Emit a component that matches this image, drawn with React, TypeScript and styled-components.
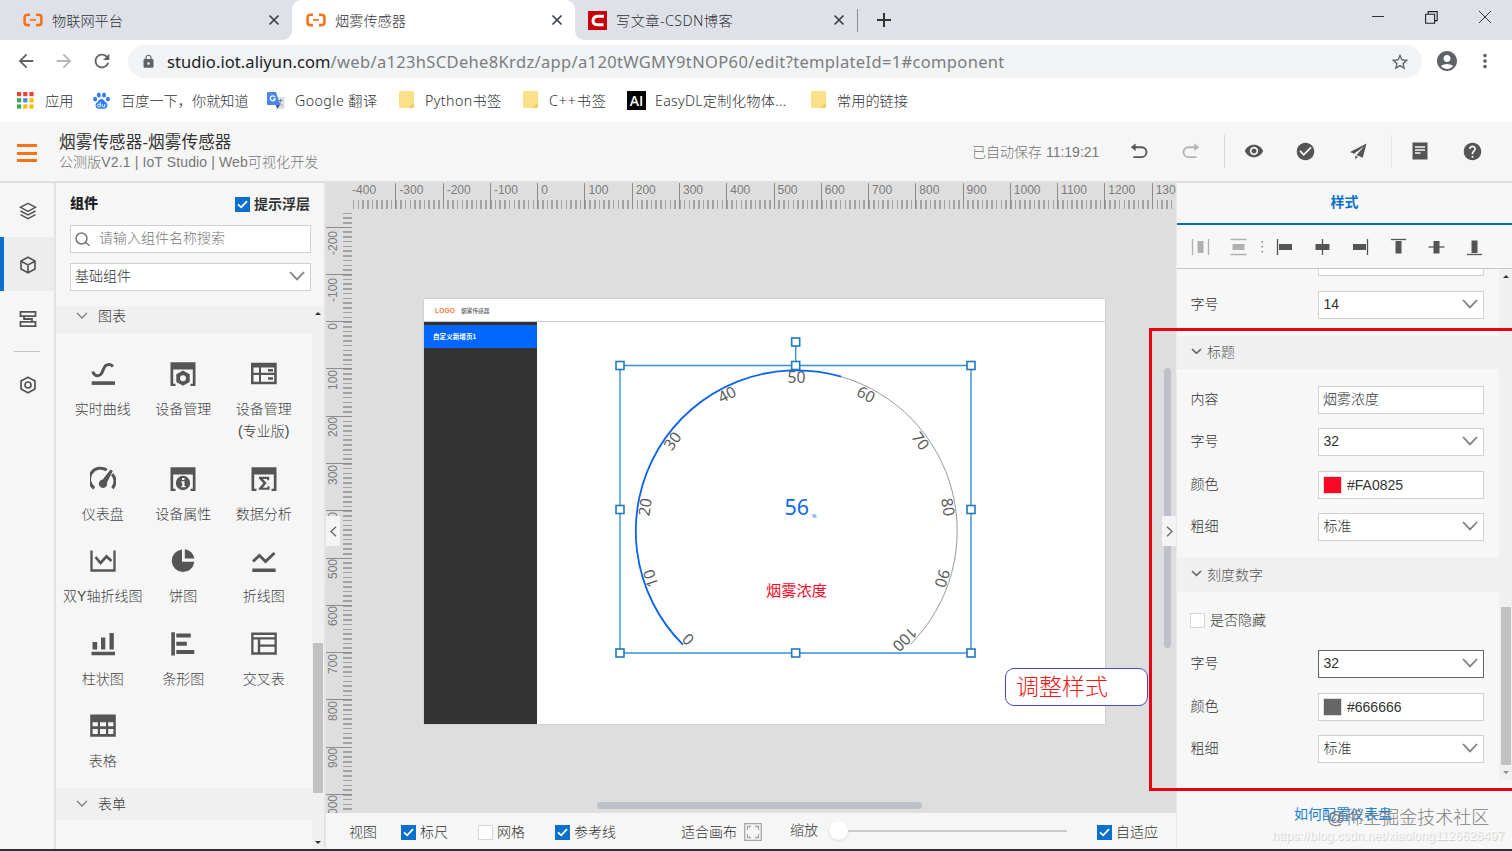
import React from "react";
import styled, { createGlobalStyle, css } from "styled-components";
import {
  MdLock,
  MdArrowBack,
  MdArrowForward,
  MdRefresh,
  MdStarBorder,
  MdAccountCircle,
  MdMoreVert,
  MdVisibility,
  MdCheckCircle,
  MdHelp,
} from "react-icons/md";

const appFont = `"Liberation Sans", "Noto Sans CJK SC", sans-serif`;
const chromeFont = `"Noto Sans", "Noto Sans CJK SC", sans-serif`;

const GlobalStyle = createGlobalStyle`
  *, *::before, *::after { box-sizing: border-box; }
  body { margin: 0; overflow: hidden; background: #fff; font-family: ${appFont}; }
  svg { display: block; flex: none; }
`;

const Window = styled.div`
  position: relative;
  width: 1512px;
  height: 851px;
  display: flex;
  flex-direction: column;
  overflow: hidden;
  border-bottom: 2px solid #2f3033;
  background: #f6f6f6;
  color: #333;
  font-size: 14px;
  font-weight: 300;
`;

/* ---------- browser chrome ---------- */

const TabStrip = styled.div`
  height: 40px;
  flex: none;
  display: flex;
  background: #dee1e8;
  font-family: ${chromeFont};
`;

const Tab = styled.div<{ $w: number; $active?: boolean; $pl: number }>`
  position: relative;
  width: ${(p) => p.$w}px;
  height: 40px;
  display: flex;
  align-items: center;
  padding: 0 12px 0 ${(p) => p.$pl}px;
  font-size: 14.2px;
  color: #303336;
  ${(p) =>
    p.$active &&
    css`
      background: #fff;
      border-radius: 9px 9px 0 0;
      &::before,
      &::after {
        content: "";
        position: absolute;
        bottom: 0;
        width: 9px;
        height: 9px;
      }
      &::before {
        left: -9px;
        background: radial-gradient(circle at 0 0, transparent 8.5px, #fff 9px);
      }
      &::after {
        right: -9px;
        background: radial-gradient(circle at 100% 0, transparent 8.5px, #fff 9px);
      }
    `}
`;

const TabTitle = styled.span<{ $ls?: number }>`
  flex: 1;
  margin-left: 9px;
  padding-top: 1px;
  line-height: 20px;
  letter-spacing: ${(p) => p.$ls ?? 0}px;
  white-space: nowrap;
`;

const TabDivider = styled.div`
  width: 1px;
  height: 23px;
  margin-top: 9px;
  background: #8b8e94;
`;

const NewTab = styled.div`
  width: 51px;
  display: flex;
  align-items: center;
  justify-content: center;
`;

const WindowButtons = styled.div`
  margin-left: auto;
  height: 34px;
  display: flex;
  align-items: center;
  gap: 41px;
  padding-right: 21px;
`;

const CsdnIcon = styled.span`
  width: 19px;
  height: 19px;
  background: #c7000b;
  display: flex;
  align-items: center;
  justify-content: center;
`;

const NavBar = styled.div`
  height: 42px;
  flex: none;
  display: flex;
  align-items: center;
  gap: 16px;
  padding: 0 15px;
  background: #fff;
  color: #5f6368;
`;

const AddressBar = styled.div`
  flex: none;
  width: 1294px;
  height: 33px;
  display: flex;
  align-items: center;
  margin: 1px -3px 0 -1px;
  padding: 0 12px 0 13px;
  border-radius: 17px;
  background: #f1f3f4;
  font-family: ${chromeFont};
  color: #5f6368;
`;

const NavEnd = styled.div`
  display: flex;
  align-items: center;
  gap: 15px;
`;

const Url = styled.span`
  flex: 1;
  margin-left: 11px;
  font-size: 16.5px;
  font-weight: 400;
  letter-spacing: 0.34px;
  line-height: 24px;
  color: #7a7d81;
  b {
    font-weight: 400;
    letter-spacing: 0.08px;
    color: #202124;
  }
`;

const Bookmarks = styled.div`
  height: 40px;
  flex: none;
  display: flex;
  padding: 0 0 3px 17px;
  background: #fff;
  font-family: ${chromeFont};
  font-size: 14.2px;
  color: #303336;
`;

const Bookmark = styled.div<{ $w: number; $gap?: number; $ls?: number }>`
  width: ${(p) => p.$w}px;
  display: flex;
  align-items: center;
  gap: ${(p) => p.$gap ?? 11}px;
  letter-spacing: ${(p) => p.$ls ?? 0}px;
  line-height: 22px;
  white-space: nowrap;
`;

const Folder = styled.span`
  width: 15px;
  height: 17px;
  margin: 0 0 2px 1px;
  border-radius: 1.5px;
  background: linear-gradient(135deg, #fbe08a 82%, #f3cb58 82%);
`;

const EasyIcon = styled.span`
  width: 19px;
  height: 19px;
  margin-bottom: 1px;
  background: #000;
  color: #fff;
  font: 600 14px/19px "Open Sans", sans-serif;
  letter-spacing: 0;
  text-align: center;
`;

/* ---------- application header ---------- */

const Header = styled.header`
  height: 61px;
  flex: none;
  display: flex;
  align-items: center;
  background: #f6f6f6;
  border-bottom: 2px solid #dfdfdf;
  color: #555;
`;

const MenuButton = styled.div`
  width: 20px;
  height: 18px;
  margin: 3px 22px 0 17px;
  display: flex;
  flex-direction: column;
  justify-content: space-between;
  i {
    height: 3px;
    background: #f97316;
  }
`;

const TitleBlock = styled.div`
  flex: 1;
  display: flex;
  flex-direction: column;
`;

const AppTitle = styled.div`
  font-size: 16.6px;
  font-weight: 400;
  line-height: 20px;
  letter-spacing: 0.1px;
  padding-top: 1px;
  color: #333;
`;

const AppSubtitle = styled.div`
  font-size: 14px;
  line-height: 19px;
  letter-spacing: 0.12px;
  color: #777;
`;

const Saved = styled.div`
  width: 148px;
  padding-bottom: 2px;
  font-size: 14px;
  color: #777;
`;

const Tool = styled.div<{ $w: number }>`
  width: ${(p) => p.$w}px;
  padding-bottom: 1px;
  display: flex;
  justify-content: center;
`;

const ToolDivider = styled.div<{ $soft?: boolean }>`
  width: 1px;
  height: 33px;
  margin-left: ${(p) => (p.$soft ? 3 : 0)}px;
  background: ${(p) => (p.$soft ? "#e6e6e6" : "#d6d6d6")};
`;

/* ---------- body ---------- */

const Body = styled.div`
  flex: 1;
  min-height: 0;
  display: flex;
`;

const Rail = styled.nav`
  width: 56px;
  flex: none;
  border-right: 2px solid #e2e2e2;
  display: flex;
  flex-direction: column;
  color: #555;
`;

const RailItem = styled.div<{ $active?: boolean }>`
  height: 54px;
  display: flex;
  align-items: center;
  justify-content: center;
  border-left: 4px solid ${(p) => (p.$active ? "#0a70cc" : "transparent")};
  padding: 2px 3px 0 0;
  background: ${(p) => (p.$active ? "#ededed" : "transparent")};
`;

const RailDivider = styled.div`
  width: 26px;
  height: 1px;
  margin: 6px 0 5px 14px;
  background: #c4c4c4;
`;

const Components = styled.aside`
  width: 270px;
  flex: none;
  display: flex;
  flex-direction: column;
  border-right: 2px solid #e4e4e4;
`;

const PanelTop = styled.div`
  height: 42px;
  display: flex;
  align-items: center;
  justify-content: space-between;
  padding: 1px 14px 0 14px;
  font-weight: 700;
  line-height: 20px;
  strong {
    padding-bottom: 3px;
    color: #222;
  }
`;

const CheckLabel = styled.label<{ $w?: number; $lift?: number }>`
  display: flex;
  align-items: center;
  gap: 4px;
  width: ${(p) => (p.$w ? p.$w + "px" : "auto")};
  white-space: nowrap;
  line-height: 20px;
  > em {
    font-style: normal;
    padding-bottom: ${(p) => p.$lift ?? 0}px;
  }
`;

const Box = styled.span<{ $on?: boolean }>`
  width: 15px;
  height: 15px;
  flex: none;
  display: flex;
  align-items: center;
  justify-content: center;
  background: ${(p) => (p.$on ? "#0a70cc" : "#fff")};
  border: ${(p) => (p.$on ? "none" : "1px solid #d6d6d6")};
`;

const Field = styled.div<{ $w: number; $strong?: boolean; $pl?: number }>`
  width: ${(p) => p.$w}px;
  height: 28px;
  flex: none;
  display: flex;
  align-items: center;
  justify-content: space-between;
  padding: 0 5px 2px ${(p) => p.$pl ?? 4.5}px;
  background: #fff;
  border: ${(p) => (p.$strong ? "1.5px solid #666" : "1px solid #d2d2d2")};
  line-height: 20px;
`;

const SearchField = styled(Field)`
  justify-content: flex-start;
  gap: 9px;
  margin: 0 0 10px 14px;
  color: #777;
`;

const LibraryField = styled(Field)`
  margin-left: 14px;
`;

const ScrollArea = styled.div`
  flex: 1;
  min-height: 0;
  margin-top: 15px;
  display: flex;
`;

const ScrollBody = styled.div`
  flex: 1;
  min-width: 0;
`;

const GroupHead = styled.div<{ $h: number; $shift?: number }>`
  height: ${(p) => p.$h}px;
  display: flex;
  align-items: center;
  gap: 10px;
  padding: 0 0 ${(p) => p.$shift ?? 0}px 20px;
  background: #f0f0f0;
  line-height: 20px;
`;

const Palette = styled.div`
  display: grid;
  grid-template-columns: 80.5px 80.5px 80.5px;
  padding: 17px 0 3.5px 6.5px;
`;

const PaletteItem = styled.div`
  display: flex;
  flex-direction: column;
  align-items: center;
  padding-bottom: 12.5px;
  line-height: 22px;
  color: #444;
  text-align: center;
  white-space: nowrap;
`;

const IconSlot = styled.div`
  height: 48px;
  display: flex;
  align-items: center;
  justify-content: center;
`;

const Track = styled.div<{ $w: number; $bottom?: number }>`
  width: ${(p) => p.$w}px;
  flex: none;
  display: flex;
  flex-direction: column;
  align-items: center;
  justify-content: space-between;
  background: #f0f0f0;
  padding: 6px 0 ${(p) => p.$bottom ?? 5}px;
`;

const Thumb = styled.div<{ $h: number; $mt: number }>`
  width: 10px;
  height: ${(p) => p.$h}px;
  margin-top: ${(p) => p.$mt}px;
  margin-bottom: auto;
  background: #c1c1c1;
`;

const Arrow = styled.i<{ $down?: boolean; $dim?: boolean }>`
  border: 3px solid transparent;
  ${(p) =>
    p.$down
      ? `border-top: 3px solid ${p.$dim ? "#888" : "#333"}; border-bottom: none;`
      : "border-bottom: 3px solid #333; border-top: none;"}
`;

/* ---------- canvas ---------- */

const Center = styled.main`
  width: 850px;
  flex: none;
  display: flex;
  flex-direction: column;
`;

const Stage = styled.div`
  position: relative;
  height: 630px;
  flex: none;
  overflow: hidden;
  background: #dedede;
`;

const step = 47.28;

const RulerX = styled.div`
  position: absolute;
  left: 26px;
  top: 0;
  right: 0;
  height: 26px;
  overflow: hidden;
  display: flex;
  background: repeating-linear-gradient(to right, #a2a2a2 0 1.6px, transparent 1.6px ${step / 10}px) -3.9px 17px / 1000px 9px no-repeat;
`;

const MarkX = styled.div<{ $first?: boolean }>`
  width: ${step}px;
  height: 26px;
  flex: none;
  margin-left: ${(p) => (p.$first ? "-3.9px" : "0")};
  border-left: 1px solid #8c8c8c;
  padding-left: 3px;
  font-size: 12px;
  font-weight: 400;
  line-height: 14px;
  color: #7c7c7c;
`;

const RulerY = styled.div`
  position: absolute;
  left: 0;
  top: 29px;
  bottom: 0;
  width: 26px;
  overflow: hidden;
  display: flex;
  flex-direction: column;
  background: repeating-linear-gradient(to bottom, #a2a2a2 0 1.6px, transparent 1.6px ${step / 10}px) 17px -32.6px / 9px 1000px no-repeat;
`;

const MarkY = styled.div<{ $first?: boolean; $pt: number }>`
  height: ${step}px;
  flex: none;
  margin-top: ${(p) => (p.$first ? "-32.6px" : "0")};
  border-top: 1px solid #8c8c8c;
  padding-top: ${(p) => p.$pt}px;
  font-size: 12px;
  font-weight: 400;
  color: #7c7c7c;
  span {
    display: block;
    width: 14px;
    line-height: 14px;
    writing-mode: vertical-rl;
    transform: rotate(180deg);
  }
`;

const Page = styled.div`
  position: absolute;
  left: 98px;
  top: 116px;
  width: 681px;
  height: 425px;
  display: flex;
  flex-direction: column;
  background: #fff;
  box-shadow: 0 0 2px rgba(0, 0, 0, 0.18);
`;

const PageHeader = styled.div`
  height: 23px;
  flex: none;
  display: flex;
  align-items: center;
  gap: 6px;
  padding-left: 11px;
  border-bottom: 1px solid #c8c8c8;
  font-size: 5.7px;
  font-weight: 400;
  color: #444;
  b {
    font-size: 6.8px;
    font-weight: 700;
    color: #ff7a3d;
  }
`;

const PageBody = styled.div`
  flex: 1;
  display: flex;
`;

const PageSide = styled.div`
  width: 113px;
  padding-top: 3px;
  background: #333;
`;

const PageLink = styled.div`
  height: 23px;
  padding-left: 9px;
  background: #06f;
  color: #fff;
  font-size: 6.6px;
  font-weight: 700;
  line-height: 23px;
`;

const Selected = styled.svg`
  position: absolute;
  left: 284px;
  top: 149px;
  font-family: "Noto Sans", "Noto Sans CJK SC", sans-serif;
`;

const Fold = styled.div<{ $right?: boolean }>`
  position: absolute;
  top: 333px;
  ${(p) => (p.$right ? "right: 0;" : "left: 0;")}
  width: 14px;
  height: 30px;
  display: flex;
  align-items: center;
  justify-content: center;
  background: #f4f4f4;
`;

const VBar = styled.div`
  position: absolute;
  left: 838px;
  top: 185px;
  width: 7px;
  height: 280px;
  border-radius: 4px;
  background: #bec1cb;
`;

const HBar = styled.div`
  position: absolute;
  left: 271px;
  top: 619px;
  width: 325px;
  height: 7px;
  border-radius: 4px;
  background: #bec1c8;
`;

const BottomBar = styled.div`
  flex: 1;
  display: flex;
  align-items: center;
  padding: 2px 0 0 23px;
  line-height: 20px;
`;

const BarText = styled.span<{ $w: number }>`
  width: ${(p) => p.$w}px;
  flex: none;
`;

const ZoomText = styled(BarText)`
  padding-left: 28px;
  margin-top: -4px;
`;

const Zoom = styled.div`
  width: 238px;
  margin: -3px 30px 0 9px;
  display: flex;
  align-items: center;
  i {
    width: 19px;
    height: 19px;
    border-radius: 50%;
    background: #fff;
    box-shadow: 0 1px 3px rgba(0, 0, 0, 0.12);
  }
  &::after {
    content: "";
    flex: 1;
    height: 2px;
    background: #cbcbcb;
  }
`;

/* ---------- style inspector ---------- */

const Inspector = styled.aside`
  flex: 1;
  display: flex;
  flex-direction: column;
  background: #f7f7f7;
  border-left: 1px solid #ececec;
`;

const InspectorTab = styled.div`
  height: 42px;
  flex: none;
  border-bottom: 2px solid #0a6ab8;
  color: #0a70cc;
  font-weight: 700;
  line-height: 39px;
  text-align: center;
`;

const AlignBar = styled.div`
  height: 44px;
  flex: none;
  display: flex;
  align-items: center;
  padding-left: 14px;
  border-bottom: 1px solid #c6c6c6;
`;

const AlignSlot = styled.div<{ $w: number }>`
  width: ${(p) => p.$w}px;
`;

const InspectorScroll = styled.div`
  height: 511px;
  flex: none;
  display: flex;
  overflow: hidden;
`;

const Props = styled.div`
  flex: 1;
`;

const Clipped = styled.div`
  width: 166px;
  height: 7px;
  margin-left: 141px;
  background: #fff;
  border: 1px solid #d2d2d2;
  border-top: none;
`;

const PropRow = styled.div<{ $mt: number }>`
  height: 28px;
  margin-top: ${(p) => p.$mt}px;
  padding-left: 13.5px;
  display: flex;
  align-items: center;
  line-height: 20px;
  > span {
    width: 127.5px;
    padding-bottom: 2px;
  }
`;

const PropHead = styled.div<{ $mt: number; $h: number }>`
  height: ${(p) => p.$h}px;
  margin-top: ${(p) => p.$mt}px;
  padding: 0 0 3px 14px;
  display: flex;
  align-items: center;
  gap: 5px;
  background: #f0f0f0;
  color: #555;
`;

const HideRow = styled(CheckLabel)`
  height: 20px;
  margin: 18px 0 0 13px;
  gap: 5px;
`;

const Swatch = styled.i<{ $c: string }>`
  width: 19px;
  height: 18px;
  margin-right: 5px;
  border: 1px solid #ddd;
  background: ${(p) => p.$c};
`;

const ColorValue = styled.span`
  display: flex;
  align-items: center;
  padding-top: 1px;
`;

const Help = styled.a`
  margin: 24px 0 0 117px;
  line-height: 20px;
  font-weight: 400;
  color: #1b7fd3;
`;

/* ---------- annotations ---------- */

const RedFrame = styled.div`
  position: absolute;
  left: 1149px;
  top: 328px;
  width: 370px;
  height: 463px;
  border: 3px solid #ec0010;
`;

const Callout = styled.div`
  position: absolute;
  left: 1005px;
  top: 668px;
  width: 143px;
  height: 38px;
  padding-left: 10px;
  border: 1px solid #4a4ac8;
  border-radius: 9px;
  background: #fff;
  color: #f01818;
  font: 300 23px/38px "Liberation Serif", "Noto Sans CJK SC", serif;
`;

const Watermark = styled.div<{ $url?: boolean }>`
  position: absolute;
  white-space: nowrap;
  ${(p) =>
    p.$url
      ? css`
          left: 1272px;
          top: 828px;
          font: 400 12.6px/17px "Liberation Sans", sans-serif;
          color: #fafafa;
          text-shadow: 1px 1px 1px #cacaca;
        `
      : css`
          left: 1327px;
          top: 806px;
          font: 300 18px/24px "Liberation Sans", "Noto Sans CJK SC", sans-serif;
          color: #808080;
        `}
`;

/* ---------- icons ---------- */

const dark = "#555";

const CloseX = () => (
  <svg width="12" height="12" viewBox="0 0 12 12" stroke="#3c4043" strokeWidth="1.7">
    <path d="M1.5 1.5l9 9M10.5 1.5l-9 9" />
  </svg>
);

const AliLogo = () => (
  <svg width="20" height="14" viewBox="0 0 20 14" fill="none" stroke="#f97316" strokeWidth="2.6">
    <path d="M7 1.7H4.5Q1.6 1.7 1.6 4.4v5Q1.600 12.1 4.5 12.1H7" />
    <path d="M13 1.7h2.5q2.900 0 2.900 2.700v5q0 2.700-2.900 2.700H13" />
    <path d="M7 6.900h6" strokeWidth="1.700" />
  </svg>
);

const Chevron = ({ w = 16, c = "#808080", s = 1.8 }: { w?: number; c?: string; s?: number }) => (
  <svg width={w} height={w * 0.6} viewBox={`0 0 ${w} ${w * 0.6}`} fill="none" stroke={c} strokeWidth={s}>
    <path d={`M1 1L${w / 2} ${w * 0.6 - 1.2}L${w - 1} 1`} />
  </svg>
);

const Check = () => (
  <svg width="11" height="9" viewBox="0 0 11 9" fill="none" stroke="#fff" strokeWidth="1.8">
    <path d="M1 4.3L4.2 7.3L10 1.2" />
  </svg>
);

const Undo = ({ flip, c }: { flip?: boolean; c: string }) => (
  <svg width="18" height="16" viewBox="0 0 18 16" fill="none" stroke={c} strokeWidth="1.9">
    <g transform={flip ? "translate(18 0) scale(-1 1)" : undefined}>
      <path d="M4 4.3h7.600a4.700 4.700 0 0 1 0 9.800H3.400" />
      <path d="M5.600.6L.8 4.300l4.800 3.800z" fill={c} stroke="none" />
    </g>
  </svg>
);

const WindowFrame = () => <path d="M.5 1.300h25V25h-5v-2.200h2.300V8.500H3.200v14.300h2.300V25h-5z" />;

const paletteIcons: Record<string, React.ReactNode> = {
  curve: (
    <>
      <path d="M2.800 10.500c1.200 5 6.500 5.500 8.700 2L14 7c1.500-4 6-4.500 9-1.500" fill="none" stroke={dark} strokeWidth="3" />
      <path d="M1.700 20.300H25v3.600H1.700z" />
    </>
  ),
  device: (
    <>
      <WindowFrame />
      <path fillRule="evenodd" d="M13 9.500l6.700 3.800V21L13 24.800 6.300 21v-7.700zM13 14.200a3 3 0 1 0 0 6 3 3 0 0 0 0-6z" />
    </>
  ),
  devicePro: (
    <>
      <path fillRule="evenodd" d="M0 1.700h25.700v21.600H0zM2.500 6.500v5.200H8V6.500zM10 6.500v5.200h13.200V6.500zM2.500 14v6.800H8V14zM10 14v6.800h13.200V14z" />
      <path d="M17 8h5v2.500h-5zM17 16.200h5v2.500h-5z" />
    </>
  ),
  gauge: (
    <>
      <path d="M4.300 22.200A10.400 10.400 0 0 1 16.800 4.100M22.200 8.200a10.400 10.400 0 0 1 .2 14" fill="none" stroke={dark} strokeWidth="3" />
      <path d="M20.500 3.500l2.300 1.500-5.800 11.400a4.200 4.200 0 1 1-4.300-2.800z" />
    </>
  ),
  info: (
    <>
      <WindowFrame />
      <circle cx="13" cy="17" r="7.200" />
      <path d="M12 12h2.500v2H12zM11.200 15.300h3.300V20h1v1.300h-4.300V20h1v-3.400h-1z" fill="#f6f6f6" />
    </>
  ),
  sigma: (
    <>
      <WindowFrame />
      <path d="M7.800 10.700h10.400v3.500h-1.700l-.6-1.300h-4l3.700 4.200-3.900 4.700h4.400l.7-1.600h1.800v3.600H7.800v-1.500l4.500-5.100-4.500-5z" />
    </>
  ),
  dualLine: (
    <>
      <path d="M1.500 2.500v20h23v-20" fill="none" stroke={dark} strokeWidth="2.300" />
      <path d="M5.500 9l5 6 6-6.500 5 4.500" fill="none" stroke={dark} strokeWidth="2.700" />
    </>
  ),
  pie: (
    <>
      <path d="M12 1.500v12.200h12.300A11.300 11.300 0 1 1 12 1.500z" />
      <path d="M14.800 1.300a11.300 11.300 0 0 1 9.600 9.200h-9.600z" />
    </>
  ),
  line: (
    <>
      <path d="M2 13.500l6.500-6 6 6 9-8.500" fill="none" stroke={dark} strokeWidth="2.900" />
      <path d="M1.300 20.500h23.300V24H1.300z" />
    </>
  ),
  column: <path d="M2.500 11h4.700v7.500H2.500zM11 6.500h4.300v12H11zM19.500 2h4.300v16.500h-4.300zM1.500 20.700H25v3.500H1.500z" />,
  bar: <path d="M1.300 1.300h3.600v23.300H1.300zM6.300 2.500h14.500v4H6.300zM6.300 10.800h10.500v4H6.300zM6.300 19h18v4h-18z" />,
  cross: (
    <path fillRule="evenodd" d="M.2 1.500h25.600v22.300H.2zM2.500 3.900v2.300h21V3.900zM2.500 8.500v12.800h4.300V8.500zM9.200 8.500v5h14.300v-5zM9.200 15.800v5.500h14.300v-5.500z" />
  ),
  table: (
    <path fillRule="evenodd" d="M.2 1.500h25.600v22.300H.2zM2.600 9.300v4h5.200v-4zM10 9.300v4h6v-4zM18.200 9.300v4h5.200v-4zM2.600 16v5h5.200v-5zM10 16v5h6v-5zM18.200 16v5h5.200v-5z" />
  ),
};

const palette: [string, React.ReactNode][] = [
  ["curve", "实时曲线"],
  ["device", "设备管理"],
  ["devicePro", <>设备管理<br />(专业版)</>],
  ["gauge", "仪表盘"],
  ["info", "设备属性"],
  ["sigma", "数据分析"],
  ["dualLine", "双Y轴折线图"],
  ["pie", "饼图"],
  ["line", "折线图"],
  ["column", "柱状图"],
  ["bar", "条形图"],
  ["cross", "交叉表"],
  ["table", "表格"],
];

const rulerXMarks = Array.from({ length: 18 }, (_, i) => (i - 4) * 100);
const rulerYMarks = Array.from({ length: 14 }, (_, i) => (i - 3) * 100);

/* ---------- gauge ---------- */

const polar = (deg: number, r: number): [number, number] => {
  const a = (deg * Math.PI) / 180;
  return [186.5 + r * Math.sin(a), 199 - r * Math.cos(a)];
};

const arc = (from: number, to: number) => {
  const [x1, y1] = polar(from, 160.7);
  const [x2, y2] = polar(to, 160.7);
  return `M${x1} ${y1}A160.7 160.7 0 ${to - from > 180 ? 1 : 0} 1 ${x2} ${y2}`;
};

const handles = [
  [10, 33.5], [185.7, 33.5], [361, 33.5],
  [10, 177.5], [361, 177.5],
  [10, 321], [185.7, 321], [361, 321],
  [185.7, 10],
];

const Gauge = () => (
  <Selected width="372" height="332" viewBox="0 0 372 332">
    <path d="M10 33.500H361V321H10zM185.700 10V33" fill="none" stroke="#3a8fd6" strokeWidth="1.400" />
    <path d={arc(16.2, 135)} fill="none" stroke="#999" strokeWidth="1" />
    <path d={arc(-135, 16.2)} fill="none" stroke="#0a63f0" strokeWidth="1.800" />
    {Array.from({ length: 11 }, (_, i) => {
      const deg = -135 + 27 * i;
      const [x, y] = polar(deg, 153);
      return (
        <text key={i} x={x} y={y} dy="5.3" textAnchor="middle" fontSize="15.7" fontWeight="400" fill="#5c5c5c" transform={`rotate(${deg} ${x} ${y})`}>
          {i * 10}
        </text>
      );
    })}
    <text x="174.5" y="182.5" fontSize="21.500" fontWeight="400" fill="#1467ee">56</text>
    <text x="202" y="185.5" fontSize="5.500" fontWeight="400" fill="#1467ee">%</text>
    <text x="186.5" y="264" fontSize="15.300" fontWeight="400" fill="#fa0825" textAnchor="middle">烟雾浓度</text>
    {handles.map(([x, y]) => (
      <rect key={`${x}-${y}`} x={x - 4} y={y - 4} width="8" height="8" fill="#fff" stroke="#2079c2" strokeWidth="1.600" />
    ))}
  </Selected>
);

const spreadIcons: { w: number; d: string; bar: string }[] = [
  { w: 38, d: "M1.500 1v16M17.500 1v16", bar: "M6.500 3h6v12h-6z" },
  { w: 32, d: "M1.500 1.500h16M1.500 16.500h16", bar: "M3.500 6h12v6h-12z" },
];

const alignIcons: [string, string][] = [
  ["M2.500 1v16", "M4 6h13v6H4z"],
  ["M9.500 1v16", "M2.500 6h14v6h-14z"],
  ["M16.500 1v16", "M2 6h13v6H2z"],
  ["M2 1.500h15", "M6.500 3h6v12.500h-6z"],
  ["M1.500 9h16", "M6.500 3h6v12.500h-6z"],
  ["M2 16.500h15", "M6.500 2.500h6V15h-6z"],
];

const AlignIcon = ({ d, bar, c }: { d: string; bar: string; c: string }) => (
  <svg width="19" height="18" viewBox="0 0 19 18">
    <path d={d} stroke={c} strokeWidth="1.300" />
    <path d={bar} fill={c} />
  </svg>
);

const Select = ({ value, strong }: { value: string; strong?: boolean }) => (
  <Field $w={166} $strong={strong}>
    {value}
    <Chevron />
  </Field>
);

const Color = ({ value }: { value: string }) => (
  <Field $w={166} $pl={4}>
    <ColorValue>
      <Swatch $c={value} />
      {value}
    </ColorValue>
  </Field>
);

export default function App() {
  return (
    <Window>
      <GlobalStyle />
      <TabStrip>
        <Tab $w={292} $pl={23}>
          <AliLogo />
          <TabTitle>物联网平台</TabTitle>
          <CloseX />
        </Tab>
        <Tab $w={283} $pl={14} $active>
          <AliLogo />
          <TabTitle>烟雾传感器</TabTitle>
          <CloseX />
        </Tab>
        <Tab $w={282} $pl={13}>
          <CsdnIcon>
            <svg width="14" height="13" viewBox="0 0 14 13" fill="none" stroke="#fff" strokeWidth="3">
              <path d="M13 2.300H7Q2.400 2.300 2 6.500q0 4.200 4.500 4.200h6" />
            </svg>
          </CsdnIcon>
          <TabTitle $ls={0.45}>写文章-CSDN博客</TabTitle>
          <CloseX />
        </Tab>
        <TabDivider />
        <NewTab>
          <svg width="14" height="14" viewBox="0 0 14 14" stroke="#333" strokeWidth="2">
            <path d="M7 0v14M0 7h14" />
          </svg>
        </NewTab>
        <WindowButtons>
          <svg width="12" height="12" viewBox="0 0 12 12" stroke="#333"><path d="M0 5.500h12" /></svg>
          <svg width="13" height="13" viewBox="0 0 13 13" fill="none" stroke="#222" strokeWidth="1.100">
            <path d="M.6 3.200h9v9h-9zM3.200 3V.6h9v9H9.800" />
          </svg>
          <svg width="12" height="12" viewBox="0 0 12 12" stroke="#333"><path d="M0 0l12 12M12 0L0 12" /></svg>
        </WindowButtons>
      </TabStrip>

      <NavBar>
        <MdArrowBack size={22} />
        <MdArrowForward size={22} color="#b4b6b9" />
        <MdRefresh size={22} />
        <AddressBar>
          <MdLock size={15} />
          <Url><b>studio.iot.aliyun.com</b>/web/a123hSCDehe8Krdz/app/a120tWGMY9tNOP60/edit?templateId=1#component</Url>
          <MdStarBorder size={20} />
        </AddressBar>
        <NavEnd>
          <MdAccountCircle size={24} />
          <MdMoreVert size={22} />
        </NavEnd>
      </NavBar>

      <Bookmarks>
        <Bookmark $w={76}>
          <svg width="17" height="17" viewBox="0 0 17 17">
            {["#ea4335", "#ea4335", "#ea4335", "#34a853", "#4285f4", "#fbbc05", "#34a853", "#fbbc05", "#fbbc05"].map((c, i) => (
              <rect key={i} x={(i % 3) * 6.2} y={Math.floor(i / 3) * 6.2} width="4.2" height="4.2" fill={c} />
            ))}
          </svg>
          应用
        </Bookmark>
        <Bookmark $w={174}>
          <svg width="17" height="17" viewBox="0 0 17 17" fill="#2f7bf0">
            <ellipse cx="5.800" cy="3" rx="2" ry="2.600" />
            <ellipse cx="11" cy="3" rx="2" ry="2.600" />
            <ellipse cx="2.100" cy="7.200" rx="1.900" ry="2.400" />
            <ellipse cx="14.900" cy="7.200" rx="1.900" ry="2.400" />
            <path d="M8.500 7c2 0 3 2.200 4.600 3.600 2 1.700 1.900 5.900-1.400 6.100-1.500.1-5 .1-6.400 0-3.300-.2-3.400-4.400-1.400-6.100C5.500 9.200 6.500 7 8.500 7z" />
            <path d="M7.300 10.200v4.600H5.600a1.300 1.300 0 0 1 0-2.600h1.700M9.200 12v1.800q0 1 1 1h1.600V12" fill="none" stroke="#fff" strokeWidth=".9" />
          </svg>
          百度一下，你就知道
        </Bookmark>
        <Bookmark $w={131} $gap={10} $ls={0.42}>
          <svg width="18" height="18" viewBox="0 0 18 18">
            <path d="M7 5h9.500a1 1 0 0 1 1 1v10a1 1 0 0 1-1 1H10z" fill="#dcdfe4" />
            <path d="M11 8.500h5M13.500 7v1.500c0 2-1 4-3 5M12 10c.5 1.500 2 3 3.500 3.500" stroke="#7b8796" fill="none" />
            <path d="M1 0h8l4 13H1a1 1 0 0 1-1-1V1a1 1 0 0 1 1-1z" fill="#4a86ee" />
            <path d="M9 13h4l-3 4z" fill="#2a4fb8" />
            <path d="M8 5.200A2.500 2.500 0 1 0 8.200 7H6" stroke="#fff" strokeWidth="1.200" fill="none" />
          </svg>
          Google 翻译
        </Bookmark>
        <Bookmark $w={124} $ls={0.4}><Folder />Python书签</Bookmark>
        <Bookmark $w={105} $ls={0.9}><Folder />C++书签</Bookmark>
        <Bookmark $w={183} $gap={9} $ls={0.28}><EasyIcon>AI</EasyIcon>EasyDL定制化物体...</Bookmark>
        <Bookmark $w={120}><Folder />常用的链接</Bookmark>
      </Bookmarks>

      <Header>
        <MenuButton><i /><i /><i /></MenuButton>
        <TitleBlock>
          <AppTitle>烟雾传感器-烟雾传感器</AppTitle>
          <AppSubtitle>公测版V2.1 | IoT Studio | Web可视化开发</AppSubtitle>
        </TitleBlock>
        <Saved>已自动保存 11:19:21</Saved>
        <Tool $w={38}><Undo c={dark} /></Tool>
        <Tool $w={66}><Undo c="#b5b5b5" flip /></Tool>
        <ToolDivider />
        <Tool $w={58}><MdVisibility size={20} /></Tool>
        <Tool $w={45}><MdCheckCircle size={21} /></Tool>
        <Tool $w={60}>
          <svg width="17" height="17" viewBox="0 0 17 17" fill={dark}>
            <path d="M16.500.5L0 9l4 1.800L14 3.500 6.500 12l6.300 2.800zM5.300 12.500v4l2.600-2.700z" />
          </svg>
        </Tool>
        <ToolDivider $soft />
        <Tool $w={56}>
          <svg width="16" height="18" viewBox="0 0 16 18">
            <path d="M.5.500h15v17H.5z" fill={dark} />
            <path d="M3 5h10M3 8h10M3 11h5.500" stroke="#f6f6f6" strokeWidth="1.300" />
          </svg>
        </Tool>
        <Tool $w={48}><MdHelp size={21} /></Tool>
        <Tool $w={16} />
      </Header>

      <Body>
        <Rail>
          <RailItem>
            <svg width="18" height="18" viewBox="0 0 18 18" fill="none" stroke={dark} strokeWidth="1.500">
              <path d="M9 1.300l7.500 4-7.500 4-7.500-4zM1.500 9L9 13l7.500-4M1.500 12.700L9 16.700l7.500-4" />
            </svg>
          </RailItem>
          <RailItem $active>
            <svg width="18" height="18" viewBox="0 0 18 18" fill="none" stroke={dark} strokeWidth="1.700">
              <path d="M9 1.300l7 3.800v7.800l-7 3.800-7-3.800V5.100zM2 5.300l7 3.600 7-3.600M9 8.900v7.800" />
            </svg>
          </RailItem>
          <RailItem>
            <svg width="18" height="18" viewBox="0 0 18 18" fill="none" stroke={dark} strokeWidth="1.800">
              <path d="M1.500 1.800h15v4.400h-15zM1.500 11.800h15v4.400h-15zM5 6.200V9h8v2.800" />
            </svg>
          </RailItem>
          <RailDivider />
          <RailItem>
            <svg width="18" height="18" viewBox="0 0 18 18" fill="none" stroke={dark} strokeWidth="1.700">
              <path d="M9 1.200l7 3.900v7.800l-7 3.900-7-3.900V5.100z" />
              <circle cx="9" cy="9" r="3" />
            </svg>
          </RailItem>
        </Rail>

        <Components>
          <PanelTop>
            <strong>组件</strong>
            <CheckLabel $lift={2}><Box $on><Check /></Box><em>提示浮层</em></CheckLabel>
          </PanelTop>
          <SearchField $w={241} $pl={4}>
            <svg width="15" height="15" viewBox="0 0 15 15" fill="none" stroke="#777" strokeWidth="1.500">
              <circle cx="6.500" cy="7.500" r="5.500" />
              <path d="M10.500 11.300l4 3.500" />
            </svg>
            请输入组件名称搜索
          </SearchField>
          <LibraryField $w={241} $pl={4}>基础组件<Chevron /></LibraryField>
          <ScrollArea>
            <ScrollBody>
              <GroupHead $h={27} $shift={7}><Chevron w={12} s={1.3} />图表</GroupHead>
              <Palette>
                {palette.map(([id, label]) => (
                  <PaletteItem key={id}>
                    <IconSlot>
                      <svg width="26" height="26" viewBox="0 0 26 26" fill={dark}>{paletteIcons[id]}</svg>
                    </IconSlot>
                    <span>{label}</span>
                  </PaletteItem>
                ))}
              </Palette>
              <GroupHead $h={32}><Chevron w={12} s={1.3} />表单</GroupHead>
            </ScrollBody>
            <Track $w={12}>
              <Arrow />
              <Thumb $h={150} $mt={328} />
              <Arrow $down />
            </Track>
          </ScrollArea>
        </Components>

        <Center>
          <Stage>
            <RulerX>
              {rulerXMarks.map((m, i) => <MarkX key={m} $first={i === 0}>{m}</MarkX>)}
            </RulerX>
            <RulerY>
              {rulerYMarks.map((m, i) => <MarkY key={m} $first={i === 0} $pt={m < 0 ? 3 : 0.5}><span>{i > 0 && m}</span></MarkY>)}
            </RulerY>
            <Page>
              <PageHeader><b>LOGO</b>烟雾传感器</PageHeader>
              <PageBody>
                <PageSide><PageLink>自定义新增页1</PageLink></PageSide>
              </PageBody>
            </Page>
            <Gauge />
            <VBar />
            <HBar />
            <Fold>
              <svg width="7" height="11" viewBox="0 0 7 11" fill="none" stroke="#666" strokeWidth="1.300"><path d="M6 .8L1 5.500l5 4.700" /></svg>
            </Fold>
            <Fold $right>
              <svg width="7" height="11" viewBox="0 0 7 11" fill="none" stroke="#666" strokeWidth="1.300"><path d="M1 .8l5 4.700-5 4.700" /></svg>
            </Fold>
          </Stage>
          <BottomBar>
            <BarText $w={52}>视图</BarText>
            <CheckLabel $w={77}><Box $on><Check /></Box>标尺</CheckLabel>
            <CheckLabel $w={77}><Box />网格</CheckLabel>
            <CheckLabel $w={126}><Box $on><Check /></Box>参考线</CheckLabel>
            <BarText $w={63}>适合画布</BarText>
            <svg width="18" height="18" viewBox="0 0 18 18" fill="none" stroke="#a8a8a8" strokeWidth="1.300">
              <path d="M.7.700h16.600v16.600H.7zM3.500 7V3.500H7M11 3.500h3.500V7M14.500 11v3.500H11M7 14.500H3.500V11" />
            </svg>
            <ZoomText $w={58}>缩放</ZoomText>
            <Zoom><i /></Zoom>
            <CheckLabel><Box $on><Check /></Box>自适应</CheckLabel>
          </BottomBar>
        </Center>

        <Inspector>
          <InspectorTab>样式</InspectorTab>
          <AlignBar>
            {spreadIcons.map((a) => (
              <AlignSlot key={a.d} $w={a.w}><AlignIcon d={a.d} bar={a.bar} c="#b0b0b0" /></AlignSlot>
            ))}
            <svg width="3" height="12" viewBox="0 0 3 12" fill="#888">
              <path d="M.5 0H2v1.500H.5zM.5 5H2v1.500H.5zM.5 10H2v1.500H.5z" />
            </svg>
            <AlignSlot $w={11} />
            {alignIcons.map(([d, bar]) => (
              <AlignSlot key={d} $w={38}><AlignIcon d={d} bar={bar} c={dark} /></AlignSlot>
            ))}
          </AlignBar>
          <InspectorScroll>
            <Props>
              <Clipped />
              <PropRow $mt={15}><span>字号</span><Select value="14" /></PropRow>
              <PropHead $mt={17} $h={33}><Chevron w={11} c="#666" s={1.6} />标题</PropHead>
              <PropRow $mt={17}><span>内容</span><Field $w={166} $pl={4}>烟雾浓度</Field></PropRow>
              <PropRow $mt={14}><span>字号</span><Select value="32" /></PropRow>
              <PropRow $mt={15}><span>颜色</span><Color value="#FA0825" /></PropRow>
              <PropRow $mt={14}><span>粗细</span><Select value="标准" /></PropRow>
              <PropHead $mt={17} $h={34}><Chevron w={11} c="#666" s={1.6} />刻度数字</PropHead>
              <HideRow $lift={1}><Box /><em>是否隐藏</em></HideRow>
              <PropRow $mt={20}><span>字号</span><Select value="32" strong /></PropRow>
              <PropRow $mt={15}><span>颜色</span><Color value="#666666" /></PropRow>
              <PropRow $mt={14}><span>粗细</span><Select value="标准" /></PropRow>
            </Props>
            <Track $w={13} $bottom={6}>
              <Arrow />
              <Thumb $h={158} $mt={329} />
              <Arrow $down $dim />
            </Track>
          </InspectorScroll>
          <Help>如何配置仪表盘</Help>
        </Inspector>
      </Body>

      <RedFrame />
      <Callout>调整样式</Callout>
      <Watermark>@稀土掘金技术社区</Watermark>
      <Watermark $url>https://blog.csdn.net/xiaolong1126626497</Watermark>
    </Window>
  );
}
